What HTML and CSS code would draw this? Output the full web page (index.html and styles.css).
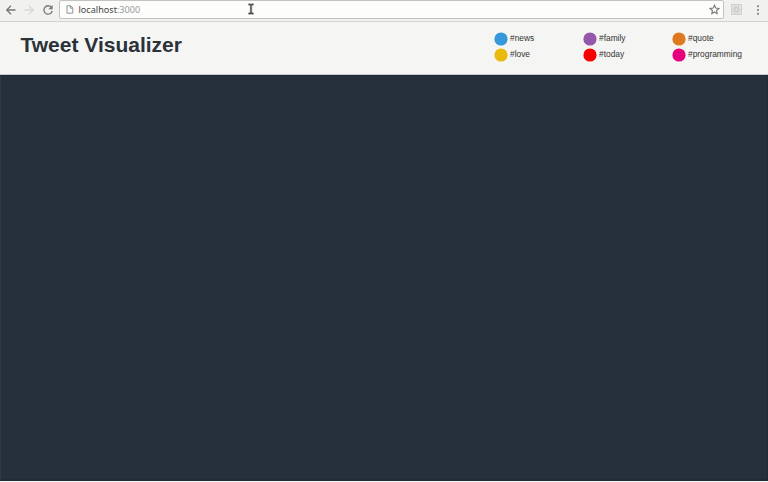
FILE: index.html
```html
<!DOCTYPE html>
<html lang="en">
<head>
<meta charset="utf-8">
<title>Tweet Visualizer</title>
<link rel="stylesheet" href="styles.css">
</head>
<body>
<div class="toolbar">
  <svg class="back" width="12" height="12" viewBox="0 0 12 12"><path d="M10.5 6H2M6 1.7 1.7 6 6 10.3"/></svg>
  <svg class="forward" width="12" height="12" viewBox="0 0 12 12"><path d="M1.5 6H10M6 1.7 10.3 6 6 10.3"/></svg>
  <svg class="reload" width="12" height="12" viewBox="0 0 12 12"><path d="M9.3 3.2A4.2 4.2 0 1 0 10.2 7"/><path class="solid" d="M10.7 1V5.3H6.4Z"/></svg>
  <div class="address">
    <svg class="page" width="8" height="9" viewBox="0 0 8 9"><path d="M1 .8H4.6L6.8 3V8.2H1ZM4.4 .8V3.2H6.8"/></svg>
    <span class="url">localhost<span class="port">:3000</span></span>
    <svg class="star" width="11" height="11" viewBox="0 0 11 11"><path d="M5.5 1.2 6.8 4.1 9.9 4.4 7.6 6.5 8.2 9.6 5.5 8 2.8 9.6 3.4 6.5 1.1 4.4 4.2 4.1Z"/></svg>
  </div>
  <svg class="extension" width="11" height="11" viewBox="0 0 11 11"><rect x=".5" y=".5" width="10" height="10"/><ellipse cx="5.5" cy="5.5" rx="4" ry="1.6"/><ellipse cx="5.5" cy="5.5" rx="4" ry="1.6" transform="rotate(60 5.5 5.5)"/><ellipse cx="5.5" cy="5.5" rx="4" ry="1.6" transform="rotate(120 5.5 5.5)"/></svg>
  <svg class="menu" width="4" height="12" viewBox="0 0 4 12"><circle cx="2" cy="2.2" r="1"/><circle cx="2" cy="6" r="1"/><circle cx="2" cy="9.8" r="1"/></svg>
  <svg class="cursor" width="8" height="12" viewBox="0 0 8 12"><path class="halo" d="M1.5 1.5H3L4 2.2 5 1.5H6.5M4 2V10M1.5 10.5H3L4 9.8 5 10.5H6.5"/><path d="M1.5 1.5H3L4 2.2 5 1.5H6.5M4 2V10M1.5 10.5H3L4 9.8 5 10.5H6.5"/></svg>
</div>
<header class="header">
  <h1 class="title">Tweet Visualizer</h1>
  <ul class="legend">
    <li class="tag"><svg class="dot news" viewBox="0 0 14 14"><circle cx="7" cy="7" r="6.6"/></svg>#news</li>
    <li class="tag"><svg class="dot family" viewBox="0 0 14 14"><circle cx="7" cy="7" r="6.6"/></svg>#family</li>
    <li class="tag"><svg class="dot quote" viewBox="0 0 14 14"><circle cx="7" cy="7" r="6.6"/></svg>#quote</li>
    <li class="tag"><svg class="dot love" viewBox="0 0 14 14"><circle cx="7" cy="7" r="6.6"/></svg>#love</li>
    <li class="tag"><svg class="dot today" viewBox="0 0 14 14"><circle cx="7" cy="7" r="6.6"/></svg>#today</li>
    <li class="tag"><svg class="dot programming" viewBox="0 0 14 14"><circle cx="7" cy="7" r="6.6"/></svg>#programming</li>
  </ul>
</header>
<main class="canvas"></main>
</body>
</html>
```
FILE: styles.css
```css
* { box-sizing: border-box; }
body {
  margin: 0;
  height: 482px;
  display: flex;
  flex-direction: column;
  overflow: hidden;
  background: #f5f6f4;
  font-family: "Liberation Sans", Arial, sans-serif;
}
svg { display: block; flex: none; fill: none; stroke: #777; stroke-width: 1.3; }
.toolbar {
  position: relative;
  flex: none;
  height: 22px;
  display: flex;
  align-items: center;
  padding: 0 8px 2px 5px;
  background: #f1f1f0;
  border-bottom: 1px solid #d2d2d1;
}
.forward { margin-left: 6px; stroke: #d8d8d7; }
.reload { margin-left: 7px; }
.reload .solid { fill: #777; stroke: none; }
.address {
  flex: 1;
  height: 19px;
  margin: 0 7px 0 5px;
  padding: 0 3px 0 6px;
  display: flex;
  align-items: center;
  background: #fdfefc;
  border: 1px solid #c3c3c2;
  border-radius: 2px;
}
.page { stroke: #888; stroke-width: .9; }
.url {
  margin-left: 4.5px;
  font: 9.1px/12px "Noto Sans", "Open Sans", sans-serif;
  color: #444;
}
.port { color: #999; }
.star { margin-left: auto; stroke-width: 1.1; }
.extension { stroke: #cececd; stroke-width: .9; }
.extension rect { fill: #e5e5e4; }
.menu { margin-left: 14px; fill: #777; stroke: none; }
.cursor { position: absolute; left: 247px; top: 3px; stroke: #444; stroke-width: 1.3; }
.cursor .halo { stroke: #c4c4c4; stroke-width: 2.6; }
.header {
  flex: none;
  height: 53px;
  display: flex;
  justify-content: space-between;
  align-items: flex-start;
  padding: 9px 7px 0 20.5px;
  background: #f5f6f4;
  border-bottom: 1px solid #c9cccd;
}
.title { margin: 0; font-size: 21px; line-height: 27px; color: #2b323a; }
.legend {
  margin: 0;
  padding: 0;
  list-style: none;
  display: grid;
  grid-template-columns: 89px 89px 89px;
  grid-auto-rows: 16px;
}
.tag {
  display: flex;
  gap: 2px;
  font-size: 8.4px;
  line-height: 14px;
  color: #333;
  white-space: nowrap;
}
.dot { width: 14px; height: 14px; margin-top: 1px; stroke: none; }
.news { fill: #3498db; }
.family { fill: #9459ad; }
.quote { fill: #df7920; }
.love { fill: #e9ba0c; }
.today { fill: #f80000; }
.programming { fill: #e6007e; }
.canvas {
  flex: 1;
  margin-bottom: 1px;
  background: #25303a;
  border: solid #202a38;
  border-width: 1px 1px 2px;
  border-left-color: #2c3c49;
}
```
